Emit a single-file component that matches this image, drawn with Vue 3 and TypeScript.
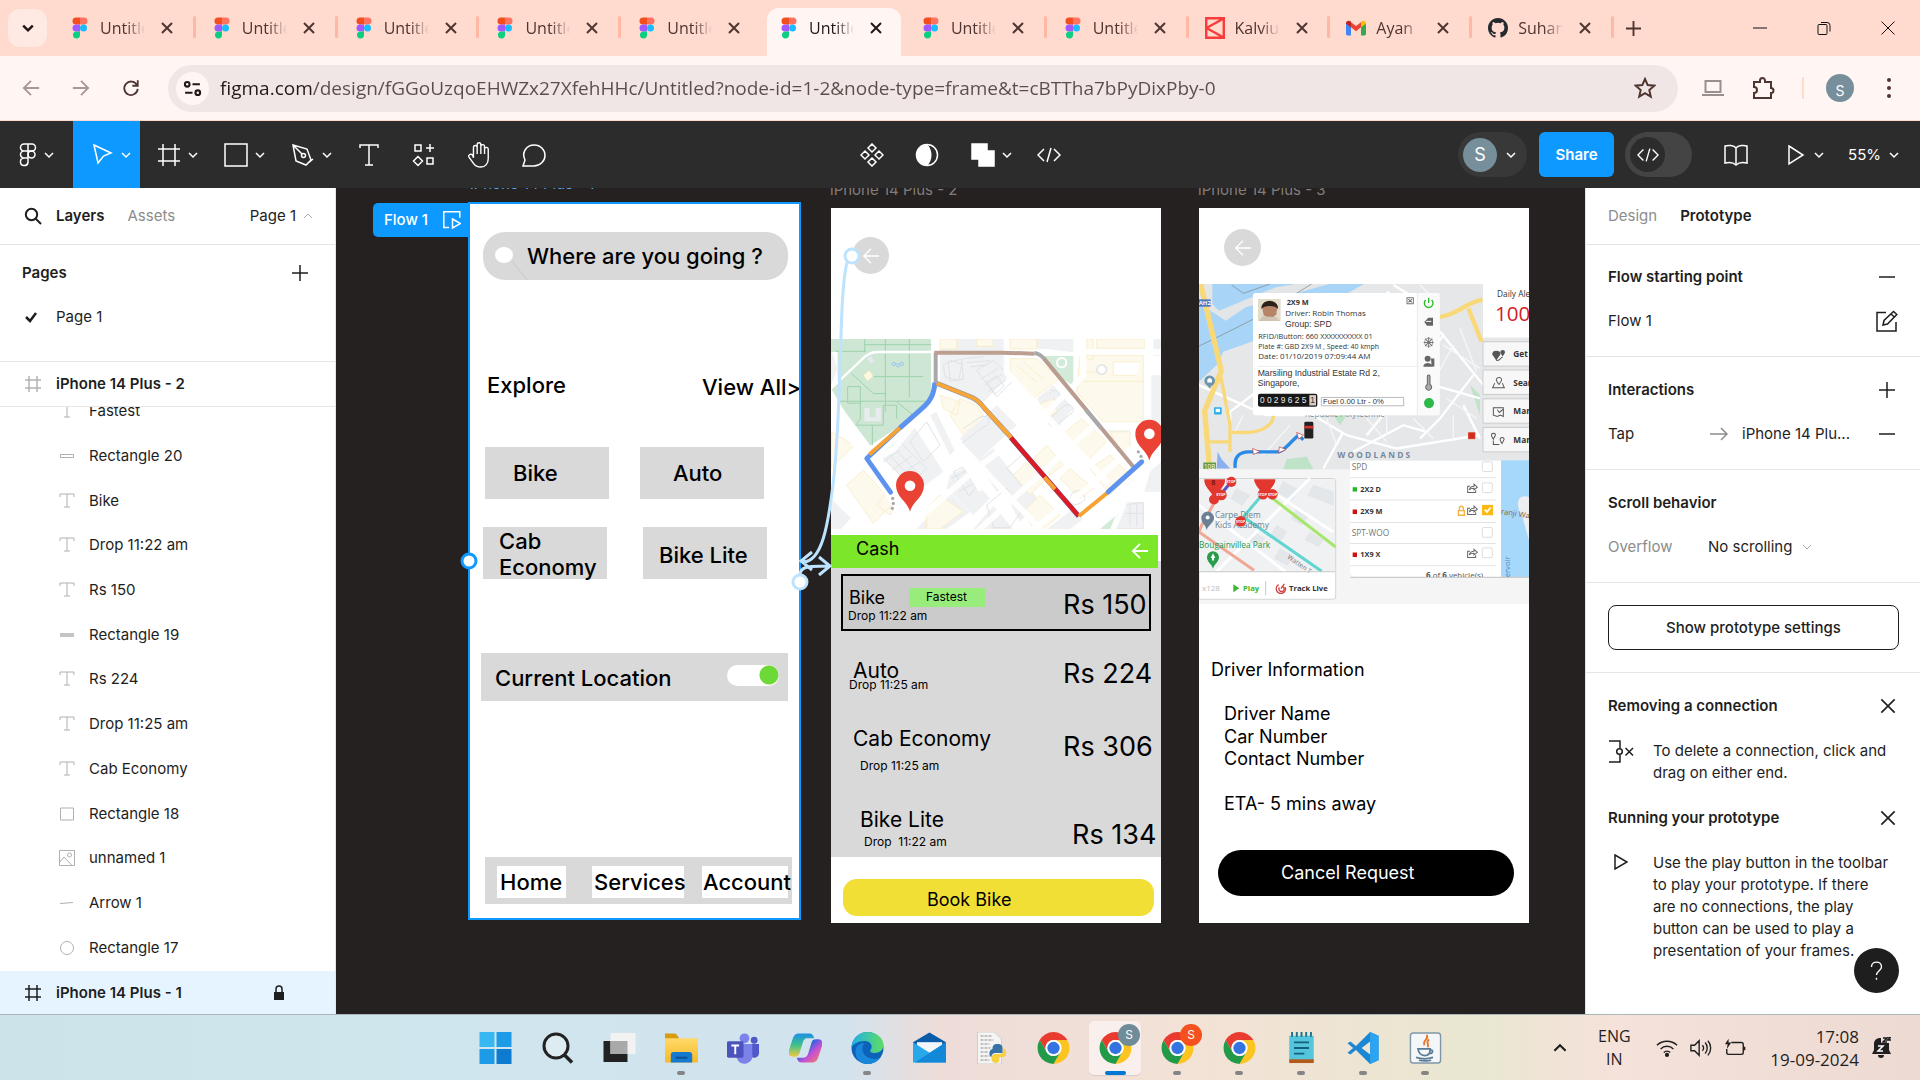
<script setup lang="ts">
import { ref } from 'vue'

interface Tab { icon: string; title: string; active?: boolean }
interface Layer { icon: string; name: string }
interface Node { x: number; y: number; w?: number; h?: number; text?: string; cls?: string; tag?: string }
interface Task { icon: string; name: string; open?: boolean; active?: boolean; badge?: string }

const url = ref('figma.com/design/fGGoUzqoEHWZx27XfehHHc/Untitled?node-id=1-2&node-type=frame&t=cBTTha7bPyDixPby-0')
const locationOn = ref(true)
const overflow = ref('No scrolling')

const tabs: Tab[] = [
  ...Array.from({ length: 8 }, (_, i) => ({ icon: 'figma', title: 'Untitled', active: i === 5 })),
  { icon: 'kalvium', title: 'Kalvium' },
  { icon: 'gmail', title: 'Ayan' },
  { icon: 'github', title: 'Suhani' },
]

const layers: Layer[] = [
  { icon: 'l-text', name: 'Fastest' },
  { icon: 'l-bar', name: 'Rectangle 20' },
  { icon: 'l-text', name: 'Bike' },
  { icon: 'l-text', name: 'Drop 11:22 am' },
  { icon: 'l-text', name: 'Rs 150' },
  { icon: 'l-fill', name: 'Rectangle 19' },
  { icon: 'l-text', name: 'Rs 224' },
  { icon: 'l-text', name: 'Drop 11:25 am' },
  { icon: 'l-text', name: 'Cab Economy' },
  { icon: 'l-rect', name: 'Rectangle 18' },
  { icon: 'l-image', name: 'unnamed 1' },
  { icon: 'l-line', name: 'Arrow 1' },
  { icon: 'l-circle', name: 'Rectangle 17' },
]

/* Shapes carry w and h and sit at their top-left corner; text is centred on y. */
const home: Node[] = [
  { x: 15, y: 30, w: 305, h: 48, cls: 'grey search' },
  { x: 27, y: 45, w: 18, h: 16, cls: 'white oval' },
  { x: 59, y: 54, text: 'Where are you going ?', cls: 'h' },
  { x: 19, y: 183, text: 'Explore', cls: 'h' },
  { x: 234, y: 185, text: 'View All>', cls: 'h' },
  { x: 17, y: 245, w: 124, h: 52, cls: 'grey' },
  { x: 45, y: 271, text: 'Bike', cls: 'h' },
  { x: 172, y: 245, w: 124, h: 52, cls: 'grey' },
  { x: 205, y: 271, text: 'Auto', cls: 'h' },
  { x: 15, y: 325, w: 124, h: 52, cls: 'grey' },
  { x: 31, y: 339, text: 'Cab\nEconomy', cls: 'h' },
  { x: 175, y: 325, w: 124, h: 52, cls: 'grey' },
  { x: 191, y: 353, text: 'Bike Lite', cls: 'h' },
  { x: 13, y: 451, w: 307, h: 48, cls: 'grey' },
  { x: 27, y: 476, text: 'Current Location', cls: 'h' },
  { x: 17, y: 655, w: 307, h: 47, cls: 'grey' },
  { x: 29, y: 664, w: 69, h: 32, cls: 'white' },
  { x: 124, y: 664, w: 92, h: 32, cls: 'white' },
  { x: 234, y: 664, w: 86, h: 32, cls: 'white' },
  { x: 32, y: 680, text: 'Home', cls: 'h' },
  { x: 126, y: 680, text: 'Services', cls: 'h' },
  { x: 235, y: 680, text: 'Account', cls: 'h' },
]

const booking: Node[] = [
  { x: 0, y: 353, w: 330, h: 296, cls: 'grey' },
  { x: 0, y: 327, w: 327, h: 33, cls: 'cash' },
  { x: 25, y: 341, text: 'Cash', cls: 'm' },
  { x: 10, y: 366, w: 310, h: 57, cls: 'picked' },
  { x: 18, y: 390, text: 'Bike', cls: 'm' },
  { x: 78, y: 380, w: 76, h: 19, cls: 'fast' },
  { x: 95, y: 389, text: 'Fastest', cls: 's' },
  { x: 17, y: 408, text: 'Drop 11:22 am', cls: 's' },
  { x: 232, y: 397, text: 'Rs 150', cls: 'l' },
  { x: 22, y: 463, text: 'Auto', cls: 'b' },
  { x: 18, y: 477, text: 'Drop 11:25 am', cls: 's' },
  { x: 232, y: 466, text: 'Rs 224', cls: 'l' },
  { x: 22, y: 531, text: 'Cab Economy', cls: 'b' },
  { x: 29, y: 558, text: 'Drop 11:25 am', cls: 's' },
  { x: 232, y: 539, text: 'Rs 306', cls: 'l' },
  { x: 29, y: 612, text: 'Bike Lite', cls: 'b' },
  { x: 33, y: 634, text: 'Drop  11:22 am', cls: 's' },
  { x: 241, y: 627, text: 'Rs 134', cls: 'l' },
  { x: 12, y: 671, w: 311, h: 37, text: 'Book Bike', cls: 'book', tag: 'button' },
]

const driver: Node[] = [
  { x: 12, y: 462, text: 'Driver Information', cls: 'm' },
  { x: 25, y: 506, text: 'Driver Name', cls: 'm' },
  { x: 25, y: 529, text: 'Car Number', cls: 'm' },
  { x: 25, y: 551, text: 'Contact Number', cls: 'm' },
  { x: 25, y: 596, text: 'ETA- 5 mins away', cls: 'm' },
  { x: 19, y: 642, w: 296, h: 46, text: 'Cancel Request', cls: 'cancel', tag: 'button' },
]

const tasks: Task[] = [
  { icon: 'windows', name: 'Start' },
  { icon: 'tsearch', name: 'Search' },
  { icon: 'taskview', name: 'Task view' },
  { icon: 'explorer', name: 'File Explorer', open: true },
  { icon: 'teams', name: 'Teams' },
  { icon: 'copilot', name: 'Copilot' },
  { icon: 'edge', name: 'Edge', open: true },
  { icon: 'mail', name: 'Mail' },
  { icon: 'python', name: 'Python file' },
  { icon: 'chrome', name: 'Chrome' },
  { icon: 'chrome', name: 'Chrome profile S', active: true, badge: '#6f8c98' },
  { icon: 'chrome', name: 'Chrome second profile', open: true, badge: '#f4511e' },
  { icon: 'chrome', name: 'Chrome window', open: true },
  { icon: 'notepad', name: 'Notepad', open: true },
  { icon: 'vscode', name: 'Visual Studio Code', open: true },
  { icon: 'java', name: 'Java', open: true },
]

/* Building outlines of the route map. */
const blocks = [
  'M370 540l20-14 36 10-10 50-40-10z', 'M385 530l40-8 5 60-40 6z', 'M470 555l50-30 60 60-50 50z', 'M500 590l30-18 22 30-26 24z',
  'M430 520l60-6M440 532l70-6M450 545l50-6', 'M484 580l50-30M494 600l54-34M506 618l50-32',
  'M430 730l50-34q20-8 26 8t-14 20l-66 50', 'M400 860l28-14 40 60-20 28z', 'M395 880l50-26M405 900l52-28M416 920l50-28',
  'M180 810l60-40 80 80-50 50z', 'M200 800l70 76M220 786l70 74M190 830l50-36M215 855l60-42', 'M240 870l60-40',
  'M690 700l40-36q20-12 28 2t-8 22l-40 32q-16 8-24-4z', 'M500 960l60-50 50 60-40 58h-50z', 'M752 930q20-24 36-6t-6 30-30-4z', 'M270 770l50-60 40 70-50 50z',
  'M910 960l60-8v80h-80zM930 962v60M950 958v66M915 985h56', 'M560 850l50-44 50 50-50 50z', 'M690 625a14 14 0 1 1 10 18',
]

function box(n: Node) {
  return n.w
    ? { left: `${n.x}px`, top: `${n.y}px`, width: `${n.w}px`, height: `${n.h}px` }
    : { left: `${n.x}px`, top: `${n.y - 13}px` }
}
</script>

<template>
  <svg width="0" height="0" class="defs" aria-hidden="true">
    <defs>
      <linearGradient id="g-cop" x1="0" y1="0" x2="1" y2="1">
        <stop offset="0" stop-color="#19b5f0" /><stop offset=".35" stop-color="#2a66e0" />
        <stop offset=".6" stop-color="#c64fd6" /><stop offset="1" stop-color="#ff8a4c" />
      </linearGradient>
      <linearGradient id="g-cop2" x1="0" y1="0" x2="0" y2="1">
        <stop offset="0" stop-color="#1d8fe8" /><stop offset=".5" stop-color="#3ec28a" /><stop offset="1" stop-color="#f5c842" />
      </linearGradient>
      <linearGradient id="g-edge" x1="0" y1="0" x2="1" y2="0">
        <stop offset="0" stop-color="#1fb0e8" /><stop offset="1" stop-color="#5fdc62" />
      </linearGradient>
      <linearGradient id="g-fold" x1="0" y1="0" x2="0" y2="1">
        <stop offset="0" stop-color="#ffd968" /><stop offset="1" stop-color="#f7b928" />
      </linearGradient>
    </defs>
    <symbol id="figma" viewBox="0 0 16 22">
      <path d="M4 .5h4v7H4a3.5 3.5 0 0 1 0-7z" fill="#f24e1e" /><path d="M8 .5h4a3.500 3.500 0 0 1 0 7H8z" fill="#ff7262" />
      <path d="M4 7.5h4v7H4a3.500 3.500 0 0 1 0-7z" fill="#a259ff" /><circle cx="11.5" cy="11" r="3.5" fill="#1abcfe" />
      <path d="M4 14.5h4V18a3.500 3.500 0 1 1-4-3.500z" fill="#0acf83" />
    </symbol>
    <symbol id="kalvium" viewBox="0 0 20 22"><path d="M1.200 1.200h17.600v19.600H1.200zM1.500 11 18.500 1.500M1.500 11l17 9.500" fill="none" stroke="#fb3a3a" stroke-width="2.400" /></symbol>
    <symbol id="gmail" viewBox="0 0 24 18">
      <path d="M0 2v14a2 2 0 0 0 2 2h4V7z" fill="#4285f4" /><path d="M24 2v14a2 2 0 0 1-2 2h-4V7z" fill="#34a853" />
      <path d="M6 2v6l6 5 6-5V2l-6 4.500z" fill="#ea4335" /><path d="M0 3.500C0 .5 3-.8 5.500 1L6 1.500V8L0 4z" fill="#c5221f" />
      <path d="M24 3.500C24 .5 21-.8 18.500 1l-.5.5V8l6-4z" fill="#fbbc04" />
    </symbol>
    <symbol id="github" viewBox="0 0 16 16"><path fill="#24292f" d="M8 0C3.580 0 0 3.580 0 8c0 3.540 2.290 6.530 5.470 7.590.4.070.55-.17.55-.38 0-.19-.01-.82-.01-1.490-2.010.37-2.530-.49-2.690-.94-.09-.23-.48-.94-.82-1.130-.28-.15-.68-.52-.01-.53.63-.01 1.080.58 1.230.82.72 1.210 1.870.87 2.330.66.070-.52.28-.87.51-1.070-1.780-.2-3.640-.89-3.640-3.950 0-.87.31-1.590.82-2.150-.08-.2-.36-1.020.08-2.120 0 0 .67-.21 2.200.82a7.600 7.600 0 0 1 4 0c1.530-1.040 2.200-.82 2.200-.82.44 1.100.16 1.920.08 2.120.51.56.82 1.270.82 2.150 0 3.070-1.870 3.750-3.650 3.950.29.25.54.73.54 1.480 0 1.070-.01 1.930-.01 2.200 0 .21.15.46.55.38A8 8 0 0 0 16 8c0-4.420-3.580-8-8-8z" /></symbol>
    <symbol id="x" viewBox="0 0 12 12"><path d="M1 1l10 10M11 1 1 11" /></symbol>
    <symbol id="chev" viewBox="0 0 10 10"><path d="M1 3l4 4 4-4" /></symbol>
    <symbol id="chevup" viewBox="0 0 10 10"><path d="M1 7l4-4 4 4" /></symbol>
    <symbol id="plus" viewBox="0 0 16 16"><path d="M8 0v16M0 8h16" /></symbol>
    <symbol id="minus" viewBox="0 0 16 16"><path d="M0 8h16" /></symbol>
    <symbol id="back" viewBox="0 0 20 20"><path d="M19 10H2M10 2l-8 8 8 8" /></symbol>
    <symbol id="fwd" viewBox="0 0 20 20"><path d="M1 10h17M10 2l8 8-8 8" /></symbol>
    <symbol id="reload" viewBox="0 0 20 20"><path d="M16.500 6.500A7.500 7.500 0 1 0 17.500 11M17.500 1.500v6h-6" /></symbol>
    <symbol id="tune" viewBox="0 0 18 18"><circle cx="4" cy="5" r="2.200" /><path d="M9 5h7M2 13h7" /><circle cx="14" cy="13" r="2.200" /></symbol>
    <symbol id="star" viewBox="0 0 22 22"><path d="M11 2l2.700 6.100 6.600.6-5 4.400 1.500 6.500L11 16.200l-5.800 3.400 1.500-6.500-5-4.400 6.600-.6z" /></symbol>
    <symbol id="laptop" viewBox="0 0 22 18"><path d="M3.500 2h15v11h-15zM0 16h22" /></symbol>
    <symbol id="ext" viewBox="0 0 24 24"><path d="M2 6h6V4.500a2.500 2.500 0 0 1 5 0V6h6v6a2.500 2.500 0 0 1 0 5v5H2v-5a3 3 0 0 0 0-6z" /></symbol>
    <symbol id="menu" viewBox="0 0 24 24"><path d="M8 1h4v7H8a3.500 3.500 0 0 1 0-7zM12 1h4a3.500 3.500 0 0 1 0 7h-4zM12 8v7H8a3.500 3.500 0 0 1 0-7M12 15v4.500A3.800 3.800 0 1 1 8 15z" /><circle cx="15.500" cy="11.500" r="3.500" /></symbol>
    <symbol id="move" viewBox="0 0 24 24"><path d="M4 2l17 8-7.500 3L8 20z" /></symbol>
    <symbol id="frame" viewBox="0 0 24 24"><path d="M6 1v22M18 1v22M1 6h22M1 18h22" /></symbol>
    <symbol id="rect" viewBox="0 0 24 24"><path d="M1 1h22v22H1z" /></symbol>
    <symbol id="pen" viewBox="0 0 24 24"><path d="M2 2l14 4 4 11-5 5-10-4zM2 2l9 9M16 21l6-5" /><circle cx="12.500" cy="12.500" r="2" /></symbol>
    <symbol id="text" viewBox="0 0 24 24"><path d="M3 5V2h18v3M12 2v20M8 22h8" /></symbol>
    <symbol id="res" viewBox="0 0 24 24"><path d="M3 2h6v6H3zM18 1v8M14 5h8M15 15h6v6h-6zM6 13.500l4.500 4.500L6 22.500 1.500 18z" /></symbol>
    <symbol id="hand" viewBox="0 0 26 28"><path d="M7 17V6c0-3 4-3 4 0v7V3c0-3 4-3 4 0v10V5c0-3 4-3 4 0v8V8c0-3 4-3 4 0v10c0 5-3 9-8 9-4 0-6-1-8-4l-5-7c-1-2 2-4 4-2z" /></symbol>
    <symbol id="comment" viewBox="0 0 24 24"><path d="M1 23l2-6C-1 9 5 2 12 2s11 5 11 10.500S18 23 12 23z" /></symbol>
    <symbol id="comp" viewBox="0 0 24 24"><path d="M12 1l4 4-4 4-4-4zM12 15l4 4-4 4-4-4zM5 8l4 4-4 4-4-4zM19 8l4 4-4 4-4-4z" /></symbol>
    <symbol id="mask" viewBox="0 0 24 24"><circle cx="12" cy="12" r="10.500" /><path d="M12 2c5 6 5 14 0 20A10 10 0 0 1 12 2z" fill="#fff" /></symbol>
    <symbol id="union" viewBox="0 0 24 24"><path d="M1 1h15v7h7v15H8v-7H1z" fill="#fff" /></symbol>
    <symbol id="code" viewBox="0 0 24 24"><path d="M7 6l-6 6 6 6M17 6l6 6-6 6M14 5l-4 14" /></symbol>
    <symbol id="book" viewBox="0 0 24 24"><path d="M12 5c-2-3-8-3-11-2v17c4-1 8-1 11 2 3-3 7-3 11-2V3c-3-1-9-1-11 2zM12 5v17" /></symbol>
    <symbol id="play" viewBox="0 0 24 24"><path d="M5 3l14 9-14 9z" /></symbol>
    <symbol id="mag" viewBox="0 0 18 18"><circle cx="7.500" cy="7.500" r="5.700" /><path d="M11.500 11.500L17 17" /></symbol>
    <symbol id="check" viewBox="0 0 12 12"><path d="M1 6l4 4 6-8" /></symbol>
    <symbol id="lock" viewBox="0 0 12 16"><path d="M3 7V4a3 3 0 0 1 6 0v3" fill="none" stroke="#1e1e1e" stroke-width="1.500" /><path d="M1 7h10v8H1z" fill="#1e1e1e" /></symbol>
    <symbol id="l-frame" viewBox="0 0 16 16"><path d="M4 0v16M12 0v16M0 4h16M0 12h16" /></symbol>
    <symbol id="l-text" viewBox="0 0 16 16"><path d="M1 4V1h14v3M8 1v13M5 14h6" /></symbol>
    <symbol id="l-bar" viewBox="0 0 16 16"><path d="M1.500 6.500h13v3h-13z" /></symbol>
    <symbol id="l-fill" viewBox="0 0 16 16"><path d="M1 6h14v4H1z" fill="#c4c4c4" stroke="none" /></symbol>
    <symbol id="l-rect" viewBox="0 0 16 16"><path d="M1.500 2h13v12h-13z" /></symbol>
    <symbol id="l-image" viewBox="0 0 16 16"><path d="M.5.500h15v15H.5zM1 12l4-5 8 8.500" /><circle cx="10.500" cy="5" r="2" /></symbol>
    <symbol id="l-line" viewBox="0 0 16 16"><path d="M1 8.500l13-1" /></symbol>
    <symbol id="l-circle" viewBox="0 0 16 16"><circle cx="8" cy="8" r="6.500" /></symbol>
    <symbol id="edit" viewBox="0 0 22 22"><path d="M10 2.500H1v18.500h19v-9M7 15l1-4.500L17.500 1.500l3.300 3L11.500 14zM15 4l3.300 3" /></symbol>
    <symbol id="arrow" viewBox="0 0 18 14"><path d="M0 7h17M11 1l6 6-6 6" /></symbol>
    <symbol id="unlink" viewBox="0 0 26 24"><path d="M1 1h11v7M12 15v7H1M17.500 8l7.500 7.500M25 8l-7.500 7.500" /><circle cx="11.500" cy="11.500" r="2.800" /></symbol>
    <symbol id="tri" viewBox="0 0 14 16"><path d="M1 1l12 7-12 7z" /></symbol>
    <symbol id="flow" viewBox="0 0 18 18"><path d="M6 16.500H.8V.8h16v6M9.500 8l8 4.500-8 4.500z" /></symbol>
    <symbol id="windows" viewBox="0 0 32 32"><path d="M0 0h15v15H0z" fill="#37b8f2" /><path d="M17 0h15v15H17zM0 17h15v15H0z" fill="#1e9be6" /><path d="M17 17h15v15H17z" fill="#0c7bd0" /></symbol>
    <symbol id="tsearch" viewBox="0 0 32 32"><circle cx="14.500" cy="14" r="12" fill="#dcecf0" stroke="#222" stroke-width="3" /><path d="M23 23l7.500 7.500" stroke="#222" stroke-width="3.500" /></symbol>
    <symbol id="taskview" viewBox="0 0 32 32"><path d="M0 9h24v21H0z" fill="#222" /><path d="M7 1h25v21H7z" fill="#f2f2f2" /><path d="M7 9h17v13H7z" fill="#a9a9a9" /></symbol>
    <symbol id="explorer" viewBox="0 0 34 32"><path d="M0 1h11l3 4v6H0z" fill="#d89b0c" /><path d="M0 6h34v24a1 1 0 0 1-1 1H1a1 1 0 0 1-1-1z" fill="url(#g-fold)" /><path d="M6 31v-8a3 3 0 0 1 3-3h16a3 3 0 0 1 3 3v8z" fill="#1479d0" /><path d="M11 26h12" stroke="#0b4e91" stroke-width="2" /></symbol>
    <symbol id="teams" viewBox="0 0 34 32"><circle cx="28" cy="8" r="3.500" fill="#5059c9" /><circle cx="18" cy="6" r="5" fill="#7b83eb" /><path d="M24 12h9v9a5 5 0 0 1-9 3z" fill="#5059c9" /><path d="M10 12h16v10a8 8 0 0 1-16 4z" fill="#7b83eb" /><rect y="9" width="17" height="17" rx="1.500" fill="#4b53bc" /><path d="M4.500 13.500h8M8.500 13.500v9" stroke="#fff" stroke-width="2" /></symbol>
    <symbol id="copilot" viewBox="0 0 34 32"><path d="M10 1h11c3 0 4 2 5 5H19c-3 0-4 2-5 5l-3 10c-1 3-2 4-5 4H4c-4 0-5-3-4-7L4 6c1-3 3-5 6-5z" fill="url(#g-cop2)" /><path d="M24 31H13c-3 0-4-2-5-5h7c3 0 4-2 5-5l3-10c1-3 2-4 5-4h2c4 0 5 3 4 7l-4 12c-1 3-3 5-6 5z" fill="url(#g-cop)" /></symbol>
    <symbol id="edge" viewBox="0 0 32 32"><circle cx="16" cy="16" r="16" fill="#0c62b8" /><path d="M0 15C1 6 8 0 16 0c9 0 16 6 16 13 0 5-4 8-9 8-3 0-5-1-4-3 3-4 0-9-6-9C7 9 2 12 0 15z" fill="url(#g-edge)" /><path d="M11 17c0 7 7 10 13 10 2 0 4-1 5-2-3 5-8 7-13 7C8 32 4 26 4 20s4-9 9-9c-1 1-2 3-2 6z" fill="#1a86d9" /></symbol>
    <symbol id="mail" viewBox="0 0 34 32"><path d="M0 10L17 0l17 10v20H0z" fill="#0a5ba8" /><path d="M4 10h26v12H4z" fill="#f2f6fa" /><path d="M0 10l17 11L34 10v21H0z" fill="#28a8ea" /><path d="M34 10v21H2z" fill="#1488d8" /></symbol>
    <symbol id="python" viewBox="0 0 32 32"><path d="M2 0h17l7 7v25H2z" fill="#f4f4f2" stroke="#cfcfcf" /><path d="M5 4h11M5 8h13M5 12h9M5 16h10M5 20h8M5 24h9M5 28h9" stroke="#c2c2c2" stroke-width="2" stroke-dasharray="3 1" /><path d="M17 17c0-3 1-5 5-5s5 2 5 4v5h-7c-3 0-4 2-4 4-3-1-3-7 1-8z" fill="#3873a8" /><path d="M28 16c3 1 4 8 0 9h-4v3c0 4-8 4-8-1 0-3 1-5 4-5h5c2 0 3-2 3-6z" fill="#f8cf3e" /></symbol>
    <symbol id="chrome" viewBox="2 2 44 44"><path d="M24 13H43.050A22 22 0 0 0 4.950 13L14.470 29.500A11 11 0 0 1 24 13z" fill="#ea3b30" /><path d="M33.530 29.500L24 46A22 22 0 0 0 43.050 13H24A11 11 0 0 1 33.530 29.500z" fill="#fcc41f" /><path d="M14.470 29.500L4.950 13A22 22 0 0 0 24 46L33.530 29.500A11 11 0 0 1 14.470 29.500z" fill="#229a48" /><circle cx="24" cy="24" r="11" fill="#fff" /><circle cx="24" cy="24" r="8.500" fill="#3474e0" /></symbol>
    <symbol id="notepad" viewBox="0 0 28 34"><path d="M1 4h26v27H1z" fill="#54c5dc" /><path d="M1 29h26v4H1z" fill="#b4591c" /><path d="M4 0v5M9 0v5M14 0v5M19 0v5M24 0v5" stroke="#176f8c" stroke-width="2" /><path d="M6 11h16M6 17h16M6 23h11" stroke="#15617d" stroke-width="2" /></symbol>
    <symbol id="vscode" viewBox="0 0 34 34"><path d="M24 0l9 4v26l-9 4L9 19l-6 5-3-2 6-5-6-5 3-2 6 5zM24 10l-9 7 9 7z" fill="#1b86d3" fill-rule="evenodd" /><path d="M24 0l9 4v26l-9 4z" fill="#2ba4f2" /></symbol>
    <symbol id="java" viewBox="0 0 34 34"><rect x="1" y="1" width="32" height="32" rx="3" fill="#f4f6f8" stroke="#7f97a8" stroke-width="1.500" /><path d="M18 3c4 4-5 6-2 11M21 8c-5 3 1 5-2 8" fill="none" stroke="#e8792b" stroke-width="2" /><path d="M9 18h13c0 6-3 7-6 7s-6-1-7-7zM22 19c4 0 3 4-1 4M7 27c6 2 12 2 18 0M10 30c5 1 9 1 13 0" fill="none" stroke="#5b7c96" stroke-width="1.800" /></symbol>
    <symbol id="wifi" viewBox="0 0 24 20"><path d="M1 7a16 16 0 0 1 22 0M5 11a10 10 0 0 1 14 0M8.500 15a5 5 0 0 1 7 0" /><circle cx="12" cy="17.500" r="1.500" fill="#1f1f1f" /></symbol>
    <symbol id="sound" viewBox="0 0 24 20"><path d="M1 7h4l5-5v16l-5-5H1zM13.500 7a4.500 4.500 0 0 1 0 6M16.500 4a9 9 0 0 1 0 12M19.500 2a12 12 0 0 1 0 16" /></symbol>
    <symbol id="batt" viewBox="0 0 24 20"><path d="M8 4h11a2 2 0 0 1 2 2v9a2 2 0 0 1-2 2H5a2 2 0 0 1-2-2v-4M22.500 8.500v4" /><path d="M5 0L1 6h3l-1 5 5-7H5z" fill="#1f1f1f" stroke="none" /></symbol>
    <symbol id="bell" viewBox="0 0 20 22"><path d="M1 17l2-4V7c0-4 3-6 6-6h1v5h8v7l2 4zM7 18h6a3 3 0 0 1-6 0z" fill="#1f1f1f" /><path d="M12 1h4l-4 4h4M16.500 0H20l-3.500 3H20" fill="none" stroke="#1f1f1f" /><path d="M7 9h5l-5 5h5" fill="none" stroke="#fff" /></symbol>
  </svg>

  <div class="screen">
    <header class="tabstrip">
      <button class="tabmenu" aria-label="Search tabs"><svg><use href="#chev" /></svg></button>
      <nav class="tabs">
        <div v-for="(t, i) in tabs" :key="i" class="tab" :class="{ on: t.active, plain: i === 4 }">
          <svg class="fav"><use :href="'#' + t.icon" /></svg>
          <span class="title">{{ t.title }}</span>
          <button class="close" aria-label="Close tab"><svg><use href="#x" /></svg></button>
        </div>
      </nav>
      <button class="newtab" aria-label="New tab"><svg><use href="#plus" /></svg></button>
      <div class="winctl">
        <button aria-label="Minimize"><svg><path d="M0 7h14" /></svg></button>
        <button aria-label="Restore"><svg><path d="M1 4.500a1 1 0 0 1 1-1h7a1 1 0 0 1 1 1v8a1 1 0 0 1-1 1H2a1 1 0 0 1-1-1zM4 1.500h6a3 3 0 0 1 3 3v6" /></svg></button>
        <button aria-label="Close"><svg><path d="M.5.500l13 13M13.500.5l-13 13" /></svg></button>
      </div>
    </header>

    <div class="addressrow">
      <button class="nav dim" aria-label="Back"><svg><use href="#back" /></svg></button>
      <button class="nav dim" aria-label="Forward"><svg><use href="#fwd" /></svg></button>
      <button class="nav" aria-label="Reload"><svg><use href="#reload" /></svg></button>
      <div class="omnibox">
        <button class="site" aria-label="Site information"><svg><use href="#tune" /></svg></button>
        <input v-model="url" aria-label="Address" spellcheck="false" />
        <button class="star" aria-label="Bookmark"><svg><use href="#star" /></svg></button>
      </div>
      <button class="ic laptop" aria-label="Install"><svg><use href="#laptop" /></svg></button>
      <button class="ic" aria-label="Extensions"><svg><use href="#ext" /></svg></button>
      <i class="sep"></i>
      <button class="avatar small" aria-label="Profile">S</button>
      <button class="dots" aria-label="Menu"><i></i><i></i><i></i></button>
    </div>

    <div class="toolbar">
      <div class="group">
        <button class="tool menu" aria-label="Main menu"><svg><use href="#menu" /></svg><svg class="c"><use href="#chev" /></svg></button>
        <button class="tool on" aria-label="Move"><svg><use href="#move" /></svg><svg class="c"><use href="#chev" /></svg></button>
        <button class="tool" aria-label="Frame"><svg><use href="#frame" /></svg><svg class="c"><use href="#chev" /></svg></button>
        <button class="tool" aria-label="Shape"><svg><use href="#rect" /></svg><svg class="c"><use href="#chev" /></svg></button>
        <button class="tool" aria-label="Pen"><svg><use href="#pen" /></svg><svg class="c"><use href="#chev" /></svg></button>
        <button class="tool one" aria-label="Text"><svg><use href="#text" /></svg></button>
        <button class="tool one" aria-label="Resources"><svg><use href="#res" /></svg></button>
        <button class="tool one" aria-label="Hand"><svg class="tall"><use href="#hand" /></svg></button>
        <button class="tool one" aria-label="Comment"><svg><use href="#comment" /></svg></button>
      </div>
      <div class="group">
        <button class="tool one" aria-label="Create component"><svg><use href="#comp" /></svg></button>
        <button class="tool one" aria-label="Use as mask"><svg><use href="#mask" /></svg></button>
        <button class="tool" aria-label="Union"><svg><use href="#union" /></svg><svg class="c"><use href="#chev" /></svg></button>
        <button class="tool one" aria-label="Code"><svg><use href="#code" /></svg></button>
      </div>
      <div class="group right">
        <button class="user" aria-label="Account"><span class="avatar">S</span><svg class="c"><use href="#chev" /></svg></button>
        <button class="share">Share</button>
        <button class="dev" aria-label="Dev Mode"><span><svg><use href="#code" /></svg></span></button>
        <button class="bare library" aria-label="Library"><svg><use href="#book" /></svg></button>
        <button class="bare present" aria-label="Present"><svg><use href="#play" /></svg><svg class="c"><use href="#chev" /></svg></button>
        <button class="bare zoom">55%<svg class="c"><use href="#chev" /></svg></button>
      </div>
    </div>

    <main class="work">
      <aside class="left">
        <div class="head">
          <svg class="mag"><use href="#mag" /></svg>
          <button class="strong">Layers</button>
          <button class="faint">Assets</button>
          <button class="pagesel">Page 1<svg class="c"><use href="#chevup" /></svg></button>
        </div>
        <section class="pages">
          <div class="prow"><b>Pages</b><button aria-label="Add page"><svg class="ln"><use href="#plus" /></svg></button></div>
          <div class="prow current"><svg class="tick"><use href="#check" /></svg><span>Page 1</span></div>
        </section>
        <div class="root"><svg><use href="#l-frame" /></svg><b>iPhone 14 Plus - 2</b></div>
        <div class="layerbox">
          <ul>
            <li v-for="l in layers" :key="l.name + l.icon"><svg><use :href="'#' + l.icon" /></svg><span>{{ l.name }}</span></li>
          </ul>
        </div>
        <div class="root picked-row"><svg><use href="#l-frame" /></svg><b>iPhone 14 Plus - 1</b><svg class="lock"><use href="#lock" /></svg></div>
      </aside>

      <section class="canvas">
        <span class="label first">iPhone 14 Plus - 1</span>
        <span class="label second">iPhone 14 Plus - 2</span>
        <span class="label third">iPhone 14 Plus - 3</span>
        <div class="flowtag">Flow 1<svg><use href="#flow" /></svg></div>

        <div class="artboard a1">
          <component :is="n.tag ?? 'span'" v-for="(n, i) in home" :key="i" class="node" :class="n.cls" :style="box(n)">{{ n.text }}</component>
          <svg class="handle"><path d="M1 1l15 19" /></svg>
          <input v-model="locationOn" class="switch" type="checkbox" aria-label="Current Location" />
        </div>

        <div class="artboard a2">
          <button class="round r2" aria-label="Back"><svg><use href="#back" /></svg></button>
          <svg class="map" viewBox="33 461 990 571" preserveAspectRatio="none">
            <path fill="#fff" d="M33 461h990v571H33z" />
            <g fill="#eff1f3">
              <path d="M360 461h200v120l-80 80-120-60zM180 810l100-90 90 140-80 60zM350 680l60 110-20 20-60-120zM420 760l110-100 60 60-120 110zM390 870l40-20 80 90-50 50-80-80zM470 830l50-40 70 90-60 40zM460 1032l60-70 60 70zM380 1032l70-50-60-60-100 110zM650 640l50-40 60 70-50 60zM540 900l50-40 70 90-60 60zM680 1032l80-60 30 30-40 30zM33 940l60 60-30 32H33zM1000 461h23v50h-23zM990 570h33v200h-33zM910 950h60v82h-90zM990 860l33-30v90h-50zM560 461h200v40l-80-10H560zM250 790l30-30 60 60-30 40zM860 735h70l-30 30zM33 490l20 60-20 50z" />
            </g>
            <g fill="#fdf9ec" stroke="#f8e8bb" stroke-width="2">
              <path d="M360 461h50v30h-50zM570 520h80l70 60-80 60-70-70zM780 510h190v200H850l-80-90zM470 461h50v22h-50zM570 461h80v30h-80zM830 461h145v28H830zM650 660l50-20 10 40-30 20zM360 630l60 20-10 40-40-20zM420 640l50 20 20 30-60 60-40-60zM725 750l60-50 75 70-60 60zM80 900l50-45 90 100-60 60zM580 870l40-40 50 60-40 40zM640 820l40-40 50 60-40 30zM810 850l60-40 60 60-60 60zM320 970l40-40 70 50-70 52h-40zM610 980l50-50 60 60-50 42h-30zM33 740l70 40-70 70zM720 880l30-30 70 60-40 30zM870 740h60v60h-30zM200 920l30 40-20 30-40-30zM820 461v60h-20v-60zM590 540l60 50M610 530l60 52M780 588h190M960 530h-80v40h70M790 560h70" />
            </g>
            <path d="M33 461h300v150c0 60-110 120-182 170L75 680l-42-70 20-20V500H33z" fill="#cde7d4" />
            <path d="M670 512h90v90l-30-20zM840 1032l60-50-20 50zM920 900l40-40-20 30z" fill="#d2ead8" />
            <g fill="none" stroke="#9ed2ac" stroke-width="3"><path d="M134 461v40M134 478h200M196 461v220M268 461v175M83 604h38v50H83zM57 648h270M160 574h150M95 565l65 60h40M110 720h80v-60h40v40M157 720v60M107 720l14-20v-50M230 650l50 40M48 498h90" /></g>
            <path d="M130 570l18-15 12 18-18 14z" fill="#fff8e0" stroke="#f0d890" /><path d="M133 668h16v28h18v-28h16v40h-50z" fill="#e9ecee" /><path d="M140 520l12-8 12 14-12 9z" fill="#e6e9eb" />
            <g fill="none" stroke="#9cc4e6" stroke-width="3"><circle cx="221" cy="536" r="5" /><circle cx="233" cy="540" r="5" /><circle cx="245" cy="536" r="5" /></g>
            <circle cx="725" cy="532" r="14" fill="none" stroke="#fff" stroke-width="6" />
            <circle cx="845" cy="553" r="14" fill="#fff" stroke="#e5e7ea" stroke-width="6" />
            <g fill="none" stroke="#e0e3e6" stroke-width="3"><path v-for="(b, i) in blocks" :key="i" :d="b" /></g>
            <g fill="none" stroke="#fff" stroke-linecap="round">
              <path stroke-width="7" d="M33 610l90-85c20-22 35-25 60-25h160" />
              <path stroke-width="18" d="M345 461v120M33 670l220 330M33 900l190-110 120-150M260 1032l220-190 160-120 150-150V461M985 461v310L880 1032M560 461v100l300 330M780 500h243M340 640l80 170 60 100M440 800l220 232M480 1032l340-310M640 1032l160-120 130-120M560 640l240 200M840 720h183M940 940h83" stroke-opacity=".9" />
            </g>
            <g fill="none" stroke-width="12" stroke-linejoin="round">
              <path d="M347 592V502" stroke="#aaa9aa" /><path d="M343 502h200l100 3" stroke="#bc9f90" /><path d="M643 503c15 2 22 8 32 20" stroke="#aaa9aa" />
              <path d="M672 520L940 845" stroke="#b99d90" /><path d="M798 674l46 55" stroke="#aaa9aa" />
              <path d="M212 922L140 820l100-92" stroke="#5d92ee" stroke-width="14" stroke-linecap="round" /><path d="M148 808l92-80" stroke="#f6a234" />
              <path d="M240 728l72-64c25-22 30-45 33-72" stroke="#5d92ee" stroke-width="15" />
              <path d="M350 594l105 42c20 8 28 20 40 35l80 88" stroke="#8195ae" stroke-width="15" /><path d="M350 594l105 42c20 8 28 20 40 35l80 88" stroke="#faa537" />
              <path d="M573 758l203 235" stroke="#7c4d84" stroke-width="15" /><path d="M573 758l203 235" stroke="#dd1b22" /><path d="M673 876l32 36" stroke="#f6a234" />
              <path d="M777 993l88-72" stroke="#f6a234" /><path d="M865 920l100-90" stroke="#5d92ee" stroke-width="15" stroke-linecap="round" />
            </g>
            <g fill="#ea4335"><path d="M270 980c-8-32-42-42-42-80a42 42 0 0 1 84 0c0 38-34 48-42 80zM988 826c-8-32-42-42-42-80a42 42 0 0 1 84 0c0 38-34 48-42 80z" /></g>
            <g fill="#fff"><circle cx="270" cy="902" r="16" /><circle cx="988" cy="746" r="16" /></g>
            <g fill="#aaa"><circle cx="218" cy="940" r="5" /><circle cx="220" cy="955" r="5" /><circle cx="217" cy="970" r="5" /><circle cx="955" cy="800" r="5" /><circle cx="963" cy="814" r="5" /></g>
          </svg>
          <component :is="n.tag ?? 'span'" v-for="(n, i) in booking" :key="i" class="node" :class="n.cls" :style="box(n)">{{ n.text }}</component>
          <svg class="casharrow"><use href="#back" /></svg>
        </div>

        <div class="artboard a3">
          <button class="round r3" aria-label="Back"><svg><use href="#back" /></svg></button>
          <svg class="tracker" viewBox="57 297 990 959" preserveAspectRatio="none">
            <path fill="#f5f5f5" d="M57 297h990v959H57z" />
            <path fill="#e6e7e9" d="M57 297h990v530H510v25H57z" />
            <path fill="#a8d5f7" d="M57 297h495L300 440l-170 60-20 40-53 50z" />
            <path fill="#e3e5e6" d="M57 297h40v60l20 20 170-70 60-10h100l-250 70-60 40-30-20-50-30z" />
            <path fill="#bfe3c8" d="M320 822l60-8 20 38h-90zM870 600l30 30v60zM460 690h40l-20 30z" />
            <g fill="none" stroke="#fff" stroke-width="7">
              <path d="M780 440l130 160M620 320l170 130-90 130M57 600l200 90 170 0M400 690l100 60 150 40 250-40M760 600l140 40M880 570l-100 130-60 60M430 850l60-110M560 750l90-110M150 740v-60l80-60M640 300l100 60M850 660l50 100M520 800l150-80 70 20" />
            </g>
            <g fill="none" stroke="#f6f7f8" stroke-width="4"><path d="M790 480l110 70M720 300l60 60M800 640l90 60M700 700l60 60M560 700l60 70M190 690l-30 60M330 720l-80 90M760 590l60-110M840 430l50 130M620 690v60M820 690v80M440 700l30 80" /></g>
            <path d="M57 483l58-28 120-60 160-98M155 300l35 25 80-28" fill="none" stroke="#7a8288" stroke-width="2" />
            <g fill="none" stroke="#f9d877"><path d="M62 297l62 260-50 120 15 175" stroke-width="16" /><path d="M120 560l30 160v80M150 742h50c40 0 80-20 80-50M80 770h75" stroke-width="10" /><path d="M780 396c60-10 70-40 127-52M865 370l40 100" stroke-width="13" /></g>
            <path d="M57 343h35v22H57z" fill="#4b79c6" /><text x="56" y="361" class="t bold" fill="#fff" font-size="18">AH2</text>
            <path d="M70 832h38v19H70z" fill="#5f9b44" /><text x="72" y="850" class="t" fill="#fff" font-size="19">10B</text>
            <circle cx="89" cy="587" r="16" fill="#6f95ab" /><path d="M78 596l11 14 11-14z" fill="#6f95ab" /><path d="M82 592v-9l7-5 7 5v9z" fill="#fff" />
            <rect x="102" y="666" width="23" height="22" rx="3" fill="#25b2e8" /><path d="M107 671h13v10h-13z" fill="#fff" />
            <path d="M113 800l12 22 25 28h-40z" fill="#8ab0f0" />
            <path d="M166 848c-5-30 10-48 40-48h90c20-5 35-30 60-50l14 14" fill="none" stroke="#2a8ae6" stroke-width="10" />
            <path d="M218 790l22 9-20 9zM298 785l20 8-22 10zM350 742l20 8-14 12z" fill="#fff" stroke="#c33" stroke-width="2" />
            <rect x="373" y="710" width="27" height="50" rx="4" fill="#222" /><path d="M373 722h27v8h-27z" fill="#d2322a" /><path d="M864 741h22v21h-22z" fill="#d62a20" stroke="#eeb" />
            <text x="374" y="696" class="t" fill="#6f8797" font-size="25">Republic Polytechnic</text>
            <text x="472" y="819" class="t bold" fill="#7489a0" font-size="25">W O O D L A N D S</text>
            <rect x="219" y="324" width="560" height="366" rx="8" fill="#fff" /><path d="M712 324h66v366h-66z" fill="#fafafa" /><path d="M712 324v366M234 544h476" stroke="#e2e2e2" stroke-width="2" />
            <path d="M234 342h68v66h-68z" fill="#e2dccb" /><path d="M246 366c0-24 46-26 46 0l-3 22-18 16-20-14z" fill="#b78468" /><path d="M244 372c-2-32 52-32 50 0-8-12-42-12-50 0z" fill="#2a211d" /><path d="M236 408l12-14 40 2 12 12z" fill="#cfc4b2" />
            <text x="320" y="361" class="t bold" font-size="22">2X9 M</text>
            <text x="316" y="394" class="t" font-size="24">Driver: Robin Thomas</text>
            <text x="315" y="427" class="a" font-size="26">Group: SPD</text>
            <text x="235" y="461" class="t" font-size="22">RFID/iButton: 660 XXXXXXXXXX 01</text>
            <text x="235" y="492" class="t" font-size="21">Plate #: GBD 2X9 M , Speed: 40 kmph</text>
            <text x="235" y="523" class="t" font-size="24">Date: 01/10/2019 07:09:44 AM</text>
            <text x="233" y="573" class="a" font-size="26">Marsiling Industrial Estate Rd 2,</text>
            <text x="233" y="602" class="a" font-size="26">Singapore,</text>
            <rect x="234" y="626" width="178" height="39" rx="6" fill="#181818" /><path d="M388 630h20v31h-20z" fill="#d9cfc6" />
            <text x="240" y="653" class="a" font-size="25" fill="#eee">0 0 2 9 6 2 5</text><text x="391" y="653" class="a" font-size="25" fill="#333">1</text>
            <path d="M424 637h247v25H424z" fill="#fff" stroke="#999" stroke-width="2" /><text x="429" y="657" class="a" font-size="23">Fuel 0.00 Ltr - 0%</text>
            <path d="M681 338h19v18h-19zM685 342l11 10M696 342l-11 10" fill="none" stroke="#777" stroke-width="3" />
            <path d="M737 345a13 13 0 1 0 18 0M746 338v16" fill="none" stroke="#2dbb2d" stroke-width="4" />
            <path d="M733 411l12-13h14v24h-18z" fill="#666" /><path d="M738 409h16" stroke="#fff" stroke-width="3" />
            <path d="M746 456v32M731 472h30M735 461l22 22M757 461l-22 22" stroke="#777" stroke-width="3" /><circle cx="746" cy="472" r="12" fill="none" stroke="#777" stroke-width="2" />
            <circle cx="743" cy="521" r="9" fill="#666" /><path d="M730 545c0-15 25-15 28 0zM753 520h10v24h-8z" fill="#666" />
            <path d="M742 574a4 4 0 0 1 8 0v24a9 9 0 1 1-8 0z" fill="#aaa" stroke="#666" stroke-width="3" /><circle cx="747" cy="654" r="15" fill="#2db84a" />
            <path d="M909 297h138v160H909z" fill="#fff" /><text x="951" y="335" class="t" font-size="25">Daily Alerts</text><text x="945" y="409" class="t" font-size="62" fill="#d21e27">100</text>
            <g fill="#f7f7f7" stroke="#bbb" stroke-width="2"><path d="M909 470h145v73H909zM909 555h145v73H909zM909 641h145v73H909zM909 727h145v73H909z" /></g>
            <g class="t bold" font-size="25"><text x="1000" y="517">Get</text><text x="1000" y="602">Sear</text><text x="1000" y="687">Man</text><text x="1000" y="773">Man</text></g>
            <g fill="#555"><path d="M949 526c-8-14-12-14-12-20a12 9 0 0 1 24 0c0 6-4 6-12 20zM968 514c-5-8-7-9-7-13a7 6 0 0 1 14 0c0 4-2 5-7 13z" /></g>
            <g fill="none" stroke="#555" stroke-width="3"><path d="M949 526c14 2 10-8 19-10M957 598c-8-10-9-12-8-16 4-6 13-6 16 0 1 5-4 9-8 16zM944 594l-6 14h35l-6-14M940 668h30v26l-9-4-9 4-12-4zM952 674l6 8 12-10M940 762c-6-9-7-11-5-15 3-4 8-4 11 0 2 4-3 7-6 15zM966 775c-6-9-7-11-5-15 3-4 8-4 11 0 2 4-3 7-6 15zM940 766v12h18" /></g>
            <path d="M57 880h400a10 10 0 0 1 10 10v342a10 10 0 0 1-10 10H57z" fill="#fff" stroke="#d5d5d5" stroke-width="3" />
            <path d="M57 882h408v277H57z" fill="#eff1f3" />
            <g fill="#e4e7ea" stroke="#d9dce0"><path d="M170 910l40 20-24 30-34-20zM310 890l46 24-20 30-44-22zM220 1040l34 20-18 26-36-20zM290 1020l30 20-16 24-30-18zM350 970l34 22-18 28-32-20zM390 1040l40 24-14 20-40-20zM300 1090l40 24-18 26-38-20zM400 900l60 20v40l-76-30z" /></g>
            <path d="M110 1159l280-280M57 960l260 200M230 890l230 150" fill="none" stroke="#fff" stroke-width="9" />
            <path d="M250 925l-60 70 235 163" fill="none" stroke="#62d5d3" stroke-width="9" /><path d="M272 935l195 150" fill="none" stroke="#a6e66a" stroke-width="9" /><path d="M110 940l-45 80-8 20 165 115" fill="none" stroke="#efa895" stroke-width="9" /><path d="M120 930l35-42" stroke="#5950c9" stroke-width="9" />
            <g fill="#e2372e"><path d="M73 882h62c2 20-16 30-32 56-14-24-32-36-30-56zM222 882h64c0 20-20 30-30 56-14-24-32-36-34-56z" /><circle cx="154" cy="890" r="15" /><circle cx="124" cy="929" r="16" /><circle cx="102" cy="943" r="15" /><circle cx="249" cy="927" r="16" /><circle cx="277" cy="927" r="16" /></g>
            <text x="94" y="900" class="t bold" font-size="22" fill="#7c1512">8</text>
            <path d="M80 1034c-4-16-16-22-16-36a19 19 0 0 1 38 0c0 14-18 22-22 36z" fill="#6b8193" /><circle cx="83" cy="997" r="6" fill="#fff" />
            <text x="105" y="999" class="t" font-size="25" fill="#6b8290">Carpe Diem</text><text x="105" y="1029" class="t" font-size="25" fill="#6b8290">Kids Academy</text>
            <text x="57" y="1089" class="t" font-size="25" fill="#239a4b">Bougainvillea Park</text>
            <circle cx="182" cy="1008" r="16" fill="#e2372e" />
            <g class="t bold stop" font-size="11"><text x="139" y="894">STOP</text><text x="109" y="933">STOP</text><text x="233" y="931">STOP</text><text x="264" y="931">STOP</text><text x="168" y="1012">STOP</text></g>
            <path d="M99 1150c-4-14-18-20-18-34a18 18 0 0 1 36 0c0 14-14 20-18 34z" fill="#2a9c4d" /><path d="M99 1104l7 14h-4v8h-6v-8h-4z" fill="#fff" />
            <text x="320" y="1118" class="t" font-size="20" fill="#777" transform="rotate(35 320 1118)">Watten T</text>
            <path d="M57 1159h408M257 1188v42" stroke="#c8c8c8" stroke-width="3" />
            <text x="66" y="1217" class="t" font-size="24" fill="#bcbcbc">x128</text><path d="M160 1197v24l18-12z" fill="#3ab82e" /><text x="189" y="1217" class="t bold" font-size="23" fill="#3ab82e">Play</text>
            <g fill="none" stroke="#d13b3b" stroke-width="4"><path d="M296 1198a14 14 0 1 0 20 8M298 1206a8 8 0 1 0 9-3M303 1210l10-14" /></g><text x="327" y="1217" class="t bold" font-size="23">Track Live</text>
            <path d="M510 827h455v348H528a18 18 0 0 1-18-18z" fill="#fff" /><path d="M963 825h84v350h-84z" fill="#a6d8fb" /><path d="M1047 935c-40-10-40 30-20 60l20 70z" fill="#eceeef" />
            <path d="M511 1176h536" stroke="#ccc" stroke-width="4" /><path d="M510 878h437M510 944h437M510 1012h437M510 1075h437M510 1141h437" stroke="#e3e3e3" stroke-width="3" />
            <text x="515" y="855" class="t" font-size="25" fill="#777">SPD</text><text x="515" y="1051" class="t" font-size="25" fill="#777">SPT-WOO</text>
            <g class="t bold" font-size="22"><text x="541" y="920">2X2 D</text><text x="541" y="987">2X9 M</text><text x="541" y="1116">1X9 X</text></g>
            <path d="M518 906h13v13h-13z" fill="#20b72a" /><path d="M518 973h13v13h-13zM518 1102h13v13h-13z" fill="#cc1212" />
            <g fill="#fff" stroke="#ccc" stroke-width="2"><rect x="907" y="830" width="30" height="29" rx="4" /><rect x="907" y="893" width="30" height="29" rx="4" /><rect x="907" y="1027" width="30" height="29" rx="4" /><rect x="907" y="1088" width="30" height="29" rx="4" /></g>
            <path d="M906 959h33v31h-33z" fill="#fcb913" /><path d="M914 973l7 7 11-13" fill="none" stroke="#fff" stroke-width="5" />
            <g fill="none" stroke="#666" stroke-width="3"><path v-for="y in [0, 66, 195]" :key="y" :transform="`translate(0 ${y})`" d="M870 903h-7v19h24v-7M868 914c2-8 8-11 14-11v-6l10 9-10 8v-5c-6 0-10 0-14 5z" /></g>
            <path d="M835 976h18v14h-18zM838 976v-7a6 6 0 0 1 12 0v7" fill="none" stroke="#f8b13d" stroke-width="4" />
            <svg x="510" y="1145" width="440" height="30"><text x="228" y="34" class="t" font-size="24" fill="#555"><tspan class="bold">6</tspan> of <tspan class="bold">6</tspan> vehicle(s)</text></svg>
            <text x="962" y="986" class="t" font-size="23" fill="#8b6327" transform="rotate(9 962 986)">ranji Way</text>
            <text x="991" y="1176" class="t" font-size="23" fill="#5585bb" transform="rotate(-90 991 1176)">ervoir</text>
          </svg>
          <component :is="n.tag ?? 'span'" v-for="(n, i) in driver" :key="i" class="node" :class="n.cls" :style="box(n)">{{ n.text }}</component>
        </div>

        <svg class="wires" viewBox="336 188 1249 826">
          <g fill="none" stroke="#bde3ff" stroke-width="3">
            <path d="M847 262C838 300 843 400 833 485C828 525 822 562 803 562M812 552L801 561L812 570" />
            <path d="M800 575C800 564 815 567 830 566M819 557L830 566L819 575" />
          </g>
          <g fill="#fff" stroke="#bde3ff" stroke-width="3"><circle cx="852" cy="256" r="7" /><circle cx="800" cy="582" r="7" /><circle cx="469" cy="561" r="7" stroke="#0d99ff" /></g>
        </svg>
      </section>

      <aside class="side">
        <div class="head"><button class="faint">Design</button><button class="strong">Prototype</button></div>
        <section class="sec start">
          <div class="row"><b>Flow starting point</b><button aria-label="Remove flow"><svg class="ln"><use href="#minus" /></svg></button></div>
          <div class="row"><span>Flow 1</span><button aria-label="Edit"><svg class="edit"><use href="#edit" /></svg></button></div>
        </section>
        <section class="sec">
          <div class="row"><b>Interactions</b><button aria-label="Add"><svg class="ln"><use href="#plus" /></svg></button></div>
          <div class="row"><span class="trigger">Tap</span><svg class="arr"><use href="#arrow" /></svg><span class="target">iPhone 14 Plu...</span><button aria-label="Remove"><svg class="ln"><use href="#minus" /></svg></button></div>
        </section>
        <section class="sec">
          <div class="row"><b>Scroll behavior</b></div>
          <div class="row"><label class="faint ov" for="overflow">Overflow</label><select id="overflow" v-model="overflow"><option>No scrolling</option><option>Vertical</option></select><svg class="c"><use href="#chev" /></svg></div>
        </section>
        <section class="sec settings"><button class="outline">Show prototype settings</button></section>
        <section class="tips">
          <div class="row"><b>Removing a connection</b><button aria-label="Dismiss"><svg class="ln thin"><use href="#x" /></svg></button></div>
          <div class="tip"><svg class="unlink"><use href="#unlink" /></svg><p>To delete a connection, click and drag on either end.</p></div>
          <div class="row"><b>Running your prototype</b><button aria-label="Dismiss"><svg class="ln thin"><use href="#x" /></svg></button></div>
          <div class="tip"><svg class="tri"><use href="#tri" /></svg><p>Use the play button in the toolbar to play your prototype. If there are no connections, the play button can be used to play a presentation of your frames.</p></div>
        </section>
        <button class="help" aria-label="Help"><svg viewBox="0 0 14 22"><path d="M1.500 6.500C1.500-.5 12.500-.5 12.500 6.500c0 4-5.500 4.500-5.500 9M7 18.500v2" /></svg></button>
      </aside>
    </main>

    <footer class="taskbar">
      <span></span>
      <div class="apps">
        <button v-for="t in tasks" :key="t.name" class="app" :class="{ active: t.active, open: t.open }" :aria-label="t.name">
          <svg><use :href="'#' + t.icon" /></svg>
          <em v-if="t.badge" :style="{ background: t.badge }">S</em>
        </button>
      </div>
      <div class="tray">
        <svg class="up"><use href="#chevup" /></svg>
        <span class="lang">ENG<br />IN</span>
        <svg><use href="#wifi" /></svg><svg><use href="#sound" /></svg><svg><use href="#batt" /></svg>
        <time>17:08<br />19-09-2024</time>
        <svg class="bell"><use href="#bell" /></svg>
      </div>
    </footer>
  </div>
</template>

<style>
body { margin: 0; }
</style>

<style scoped>
* { box-sizing: border-box; }
.defs { position: absolute; }
.screen { display: flex; flex-direction: column; min-height: 100vh; font: 15px/22px Inter, "Liberation Sans", sans-serif; color: #1e1e1e; }
button { border: 0; padding: 0; background: none; font: inherit; color: inherit; }
svg { flex: none; fill: none; stroke: currentColor; }
.c { width: 10px; height: 10px; }

.tabstrip { display: flex; align-items: center; height: 56px; padding-left: 8px; background: #ffdacf; color: #4e3530; font-family: "Open Sans", "Noto Sans", sans-serif; }
.tabmenu { width: 39px; height: 38px; border-radius: 12px; background: #ffe9e3; color: #1d1413; }
.tabmenu svg { width: 12px; height: 12px; stroke-width: 2; display: block; margin: auto; }
.tabs { display: flex; flex: 0 1 1560px; margin-left: 6px; align-self: stretch; align-items: flex-end; }
.tab { position: relative; display: flex; flex: 1 1 0; align-items: center; min-width: 0; height: 42px; padding: 0 17px 14px; }
.tab::after { content: ""; position: absolute; right: -1px; top: 2px; width: 3px; height: 22px; border-radius: 2px; background: #ffb8a4; }
.tab.on::after, .tab.plain::after { display: none; }
.tab.on { color: #1f1817; }
.tab.on::before { content: ""; position: absolute; inset: -6px 3px 0 5px; border-radius: 12px 12px 0 0; background: #fff6f4; }
.tab > * { position: relative; }
.fav { width: 20px; height: 22px; stroke: none; }
.title { width: 46px; margin-left: 10px; font-size: 16px; overflow: hidden; white-space: nowrap; -webkit-mask: linear-gradient(90deg, #000 26px, transparent 45px); mask: linear-gradient(90deg, #000 26px, transparent 45px); }
.close { margin-left: 15px; width: 12px; height: 22px; }
.close svg { display: block; width: 12px; height: 12px; stroke-width: 2; margin: auto; }
.newtab { width: 40px; height: 40px; }
.newtab svg { display: block; width: 15px; height: 15px; margin: auto; stroke-width: 2; }
.winctl { display: flex; margin-left: auto; color: #111; }
.winctl button { width: 64px; height: 56px; }
.winctl svg { display: block; width: 14px; height: 14px; margin: auto; }

.addressrow { display: flex; align-items: center; height: 65px; padding: 0 9px 0 6px; background: #fff6f4; border-bottom: 1px solid #ffdacf; color: #4e3530; font-family: "Open Sans", "Noto Sans", sans-serif; }
.nav { width: 50px; height: 40px; }
.nav svg { display: block; width: 18px; height: 18px; margin: auto; stroke-width: 2; }
.dim { color: #a99794; }
.omnibox { display: flex; align-items: center; flex: 1; height: 47px; margin-left: 12px; padding: 0 22px 0 8px; border-radius: 24px; background: #f1e6e6; }
.site { width: 33px; height: 33px; border-radius: 50%; background: #fff6f4; color: #1f1817; }
.site svg { display: block; width: 19px; height: 19px; margin: auto; stroke-width: 2; }
.omnibox input { flex: 1; min-width: 0; margin-left: 11px; padding: 0; border: 0; font: 19px/30px "Open Sans", "Noto Sans", sans-serif; color: transparent; background: linear-gradient(90deg, #221a19 92px, #5b4d4a 92px); -webkit-background-clip: text; background-clip: text; }
.star svg { display: block; width: 22px; height: 22px; stroke-width: 2; }
.ic { width: 48px; height: 40px; margin-left: 3px; }
.ic svg { display: block; width: 24px; height: 24px; margin: auto; stroke-width: 2; }
.laptop { margin-left: 11px; color: #97908f; }
.laptop svg { width: 22px; height: 18px; }
.sep { width: 2px; height: 22px; margin: 0 22px 0 14px; background: #ffdacf; }
.avatar { display: grid; place-items: center; width: 34px; height: 34px; border-radius: 50%; background: #778f9b; color: #fff; font: 18px/34px Inter, sans-serif; }
.small { width: 28px; height: 28px; font-size: 14px; }
.dots { display: grid; gap: 4px; width: 44px; margin-left: 13px; justify-items: center; }
.dots i { width: 4px; height: 4px; border-radius: 50%; background: #4e3530; }

.toolbar { display: grid; grid-template-columns: 1fr auto 1fr; height: 67px; background: #2c2c2c; color: #fff; }
.group { display: flex; align-items: center; }
.tool { display: flex; align-items: center; width: 67px; height: 67px; padding-left: 17px; gap: 7px; }
.tool svg:not(.c) { width: 24px; height: 24px; }
.toolbar svg { stroke-width: 1.5; }
.tool.on { background: #0d99ff; }
.menu { width: 73px; gap: 4px; padding-left: 16px; }
.one { width: 55px; padding-left: 16px; }
.tool svg.tall { height: 28px; }
.right { justify-content: flex-end; padding-right: 21px; }
.user { display: flex; align-items: center; gap: 9px; width: 69px; height: 45px; padding-left: 5px; border-radius: 23px; background: #383838; }
.share { width: 75px; height: 45px; margin-left: 12px; border-radius: 6px; background: #0d99ff; font-weight: 600; }
.dev { width: 67px; height: 45px; margin-left: 11px; padding-left: 5px; border-radius: 23px; background: #444; }
.dev span { display: grid; place-items: center; width: 35px; height: 35px; border-radius: 50%; background: #2c2c2c; }
.dev svg { width: 22px; height: 22px; }
.bare { display: flex; align-items: center; }
.bare svg:not(.c) { width: 24px; height: 24px; }
.library { margin-left: 32px; }
.present { margin-left: 36px; gap: 6px; }
.zoom { margin-left: 24px; gap: 8px; }

.work { display: flex; flex: 1; min-height: 0; }
.left { display: flex; flex-direction: column; flex: none; width: 336px; border-right: 1px solid #e5e5e5; background: #fff; }
.head { display: flex; align-items: center; height: 57px; padding: 0 22px; border-bottom: 1px solid #e5e5e5; }
.strong, b { font-weight: 600; }
.faint { color: #8c8c8c; }
.mag { width: 18px; height: 18px; margin: 0 14px 0 2px; stroke-width: 2; }
.left .faint { margin-left: 23px; }
.pagesel { display: flex; align-items: center; gap: 7px; margin-left: auto; }
.pagesel .c { color: #aaa; }
.pages { height: 117px; padding-top: 6px; border-bottom: 1px solid #e5e5e5; }
.prow { display: flex; align-items: center; justify-content: space-between; height: 44px; padding: 0 27px 0 22px; }
.ln { display: block; width: 16px; height: 16px; stroke-width: 1.5; }
.thin { stroke-width: 1.2; }
.current { justify-content: flex-start; padding-left: 25px; }
.tick { width: 12px; height: 12px; margin-right: 19px; stroke-width: 2.5; }
.root { display: flex; align-items: center; height: 45px; padding: 0 50px 0 25px; border-bottom: 1px solid #e5e5e5; gap: 15px; color: #1e1e1e; }
.root svg { width: 16px; height: 16px; color: #b3b3b3; stroke-width: 1.5; }
.layerbox { display: flex; flex: 1; overflow: hidden; min-height: 0; }
ul { display: flex; flex: 1; flex-direction: column; margin: -18px 0 1px; padding: 0; list-style: none; }
li { display: flex; flex: 1; align-items: center; gap: 14px; padding-left: 59px; }
li svg { width: 16px; height: 16px; color: #b0b0b0; }
.picked-row { height: 43px; background: #e5f4ff; border: 0; }
.picked-row svg { color: #1e1e1e; }
.picked-row .lock { width: 12px; height: 16px; margin-left: auto; stroke: none; }

.canvas { position: relative; flex: 1; min-width: 0; overflow: hidden; background: #252120; color: #000; }
.label { position: absolute; top: -9px; color: #807d7c; }
.first { left: 134px; top: -15px; color: #5ba9e8; }
.second { left: 494px; }
.third { left: 862px; }
.flowtag { position: absolute; left: 37px; top: 15px; display: flex; align-items: center; gap: 15px; width: 96px; height: 34px; padding-left: 11px; border-radius: 5px 0 0 5px; background: #0d99ff; color: #fff; font-weight: 500; }
.flowtag svg { width: 18px; height: 18px; stroke-width: 1.5; }
.artboard { position: absolute; top: 20px; width: 330px; height: 715px; background: #fff; overflow: hidden; }
.a1 { left: 132px; top: 14px; width: 333px; height: 718px; }
.a1::after { content: ""; position: absolute; inset: 0; border: 2px solid #0d99ff; }
.a2 { left: 495px; }
.a3 { left: 863px; }
.node { position: absolute; white-space: pre; line-height: 26px; }
.grey { background: #d9d9d9; }
.white { background: #fff; }
.search { border-radius: 22px; }
.oval { border-radius: 50%; }
.h { font-size: 22px; font-weight: 500; }
.s { font-size: 12px; }
.m { font-size: 18px; }
.b { font-size: 21px; }
.l { font-size: 27px; }
.cash { background: #7ce629; }
.picked { border: 2px solid #000; background: #cbcbcb; }
.fast { background: #98ec7b; }
.book, .cancel { margin: 0; border-radius: 14px; background: #f1df35; font-size: 18px; text-align: left; padding: 4px 0 0 84px; }
.cancel { border-radius: 23px; background: #000; color: #fff; padding: 0 0 0 63px; }
.handle { position: absolute; left: 43px; top: 58px; width: 17px; height: 21px; color: #c8c8c8; }
.switch { appearance: none; position: absolute; left: 259px; top: 463px; width: 52px; height: 21px; margin: 0; border-radius: 11px; background: radial-gradient(circle at 42px 10px, #6cd937 9px, #fff 10px); }
.round { position: absolute; width: 37px; height: 37px; border-radius: 50%; background: #d9d9d9; color: #fff; }
.round svg { display: block; width: 18px; height: 18px; margin: auto; stroke-width: 1.5; }
.r2 { left: 21px; top: 29px; }
.r3 { left: 25px; top: 21px; }
.map, .tracker { position: absolute; left: 0; top: 131px; width: 330px; height: 190px; stroke: none; }
.tracker { top: 76px; height: 320px; }
.t { font-family: "Open Sans", sans-serif; }
.a { font-family: "Liberation Sans", sans-serif; }
.tracker text { stroke: none; }
.tracker text:not([fill]) { fill: #333; }
.tracker .stop text { fill: #fff; }
.bold { font-weight: 700; }
.casharrow { position: absolute; left: 300px; top: 334px; width: 18px; height: 18px; color: #fff; stroke-width: 2; }
.wires { position: absolute; left: 0; top: 0; width: 1249px; height: 826px; pointer-events: none; }

.side { position: relative; flex: none; width: 335px; border-left: 1px solid #e5e5e5; background: #fff; }
.side .head { gap: 23px; }
.sec { padding: 11px 21px 0 22px; height: 113px; border-bottom: 1px solid #e5e5e5; }
.start { height: 112px; padding-top: 10px; }
.row { display: flex; align-items: center; height: 44px; }
.row button { margin-left: auto; width: 24px; height: 24px; display: grid; place-items: center; }
.edit { width: 22px; height: 22px; stroke-width: 1.5; }
.trigger { width: 102px; }
.arr { width: 18px; height: 14px; margin-right: 14px; color: #8c8c8c; stroke-width: 1.5; }
.ov { width: 100px; }
select { appearance: none; border: 0; padding: 0; margin: 0 9px 0 0; background: none; font: inherit; color: inherit; }
.row .c { color: #aaa; }
.settings { height: 90px; padding-top: 22px; }
.outline { width: 100%; height: 45px; border: 1px solid #1e1e1e; border-radius: 8px; font-weight: 500; }
.tips { padding: 11px 20px 0 22px; }
.tip { display: flex; min-height: 68px; padding-top: 12px; }
.tip svg { width: 26px; height: 24px; margin: 0 19px 0 0; stroke-width: 1.5; }
.tip .tri { width: 14px; height: 16px; margin: 2px 25px 0 6px; }
.tip p { margin: 0; width: 237px; }
.help { position: absolute; right: 21px; bottom: 21px; display: grid; place-items: center; width: 45px; height: 45px; border-radius: 50%; background: #1e1e1e; color: #fff; }
.help svg { width: 13px; height: 20px; stroke-width: 1.5; }

.taskbar { display: grid; grid-template-columns: 1fr auto 1fr; align-items: center; height: 66px; border-top: 1px solid #a9b6ba; background: linear-gradient(90deg, #cbe3e9, #cfe6ed 20%, #d2e3ee 44%, #eedcd9 49%, #f3e2d6 62%, #e9e7d1 77%, #f5e2da 84%, #ecdad3); font: 16px/23px "Open Sans", "Noto Sans", sans-serif; color: #1f1f1f; }
.apps { display: flex; gap: 10px; }
.app { position: relative; display: grid; place-items: center; width: 52px; height: 54px; border-radius: 5px; }
.app svg { width: 33px; height: 32px; stroke: none; }
.app.active { background: #f9efec; box-shadow: 0 1px 1px #d9cdc9; }
.app.open::after, .app.active::after { content: ""; position: absolute; bottom: 0; left: 22px; width: 8px; height: 4px; border-radius: 2px; background: #858585; }
.app.active::after { left: 16px; width: 21px; background: #0078d4; }
.app em { position: absolute; top: 3px; right: 1px; width: 22px; height: 22px; border-radius: 50%; color: #fff; font: 12px/22px Inter, sans-serif; text-align: center; }
.tray { display: flex; align-items: center; justify-content: flex-end; padding-right: 29px; }
.tray svg { width: 22px; height: 20px; margin-right: 12px; stroke-width: 1.5; }
.tray .up { width: 16px; height: 14px; margin-right: 29px; }
.lang { width: 34px; margin-right: 25px; text-align: center; }
time { margin-left: 12px; font-size: 17px; text-align: right; }
.tray .bell { width: 20px; height: 22px; margin: 0 0 0 12px; stroke: none; }
</style>
